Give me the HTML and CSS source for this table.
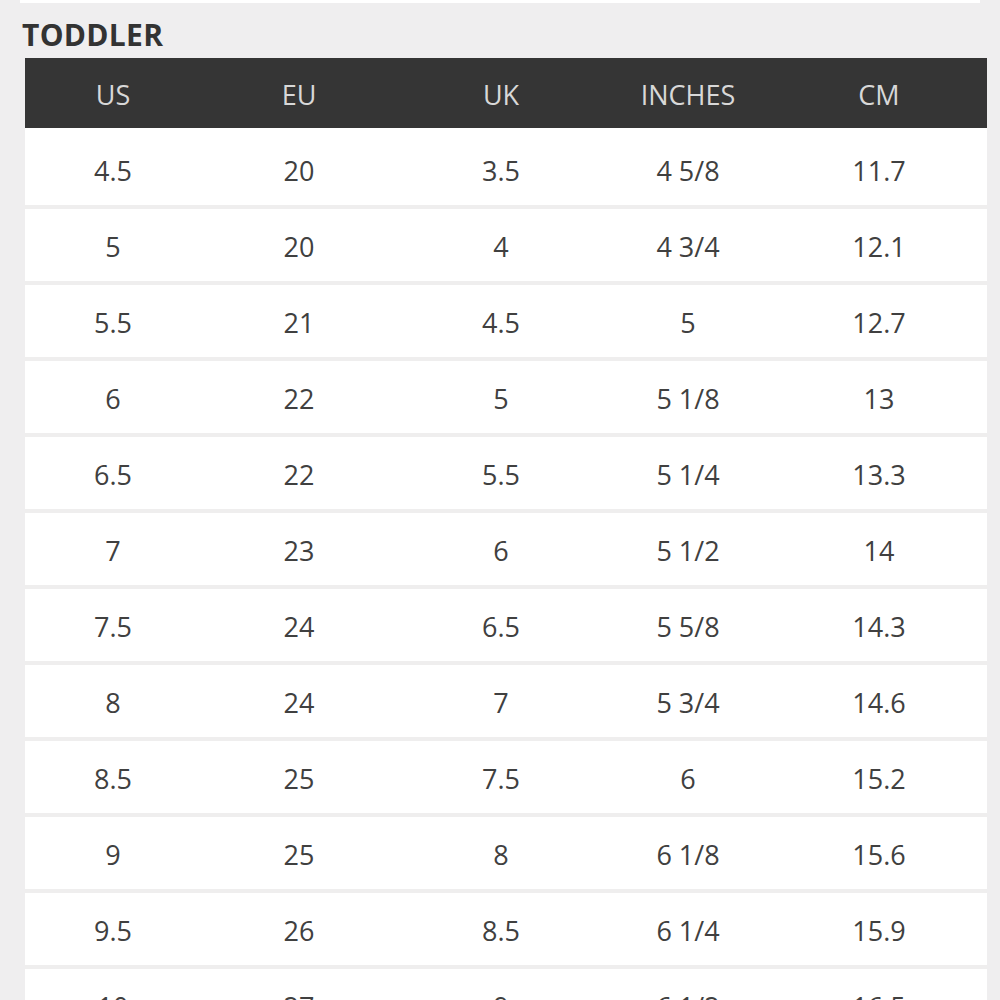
FILE: index.html
```html
<!DOCTYPE html>
<html lang="en">
<head>
<meta charset="utf-8">
<title>Toddler Size Chart</title>
<link rel="stylesheet" href="styles.css">
</head>
<body>
<div class="page">
  <div class="topbar"></div>
  <h2 class="title">TODDLER</h2>
  <div class="chart">
    <div class="head">
      <div>US</div><div>EU</div><div>UK</div><div>INCHES</div><div>CM</div>
    </div>
    <div class="body">
      <div class="row"><div>4.5</div><div>20</div><div>3.5</div><div>4 5/8</div><div>11.7</div></div>
      <div class="row"><div>5</div><div>20</div><div>4</div><div>4 3/4</div><div>12.1</div></div>
      <div class="row"><div>5.5</div><div>21</div><div>4.5</div><div>5</div><div>12.7</div></div>
      <div class="row"><div>6</div><div>22</div><div>5</div><div>5 1/8</div><div>13</div></div>
      <div class="row"><div>6.5</div><div>22</div><div>5.5</div><div>5 1/4</div><div>13.3</div></div>
      <div class="row"><div>7</div><div>23</div><div>6</div><div>5 1/2</div><div>14</div></div>
      <div class="row"><div>7.5</div><div>24</div><div>6.5</div><div>5 5/8</div><div>14.3</div></div>
      <div class="row"><div>8</div><div>24</div><div>7</div><div>5 3/4</div><div>14.6</div></div>
      <div class="row"><div>8.5</div><div>25</div><div>7.5</div><div>6</div><div>15.2</div></div>
      <div class="row"><div>9</div><div>25</div><div>8</div><div>6 1/8</div><div>15.6</div></div>
      <div class="row"><div>9.5</div><div>26</div><div>8.5</div><div>6 1/4</div><div>15.9</div></div>
      <div class="row"><div>10</div><div>27</div><div>9</div><div>6 1/2</div><div>16.5</div></div>
    </div>
  </div>
</div>
</body>
</html>
```
FILE: styles.css
```css
html, body {
  margin: 0;
  padding: 0;
  background: #efeeef;
}
body {
  font-family: "Open Sans", "Liberation Sans", sans-serif;
  overflow: hidden;
  height: 1000px;
}
.page {
  padding-left: 22px;
}
.topbar {
  width: 960px;
  height: 3px;
  margin-left: -2px;
  background: #ffffff;
}
.title {
  margin: 14px 0 5px 0;
  font-size: 30px;
  line-height: 36px;
  font-weight: 700;
  color: #333333;
  letter-spacing: 0.3px;
}
.chart {
  margin-left: 3px;
  width: 962px;
}
.head, .row {
  display: grid;
  grid-template-columns: 176px 196px 208px 166px 216px;
  align-items: center;
  text-align: center;
}
.head {
  height: 70px;
  box-sizing: border-box;
  padding-top: 2px;
  background: #353535;
  color: #d8d8d8;
  font-size: 27px;
}
.body {
  background: #ffffff;
  padding-top: 5px;
}
.row {
  height: 72px;
  box-sizing: content-box;
  color: #404040;
  font-size: 27px;
}
.row > div {
  padding-top: 3px;
}
.row + .row {
  border-top: 4px solid #efeeee;
}
```
